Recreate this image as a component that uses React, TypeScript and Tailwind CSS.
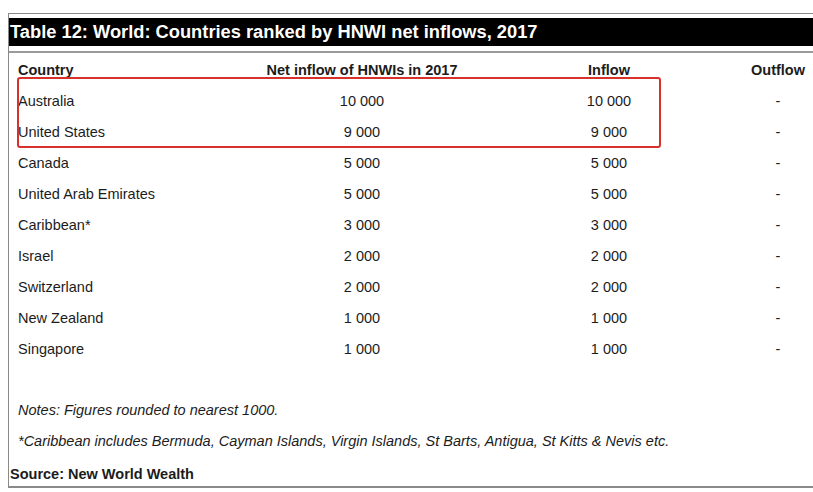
const rows = [
  { country: 'Australia', net: '10 000', inflow: '10 000', outflow: '-' },
  { country: 'United States', net: '9 000', inflow: '9 000', outflow: '-' },
  { country: 'Canada', net: '5 000', inflow: '5 000', outflow: '-' },
  { country: 'United Arab Emirates', net: '5 000', inflow: '5 000', outflow: '-' },
  { country: 'Caribbean*', net: '3 000', inflow: '3 000', outflow: '-' },
  { country: 'Israel', net: '2 000', inflow: '2 000', outflow: '-' },
  { country: 'Switzerland', net: '2 000', inflow: '2 000', outflow: '-' },
  { country: 'New Zealand', net: '1 000', inflow: '1 000', outflow: '-' },
  { country: 'Singapore', net: '1 000', inflow: '1 000', outflow: '-' },
];

const Row = ({ cells, bold }: { cells: string[]; bold?: boolean }) => (
  <div className={`flex h-[31px] items-center whitespace-nowrap pl-[9px] ${bold ? 'font-bold' : ''}`}>
    <div className="w-[247px]">{cells[0]}</div>
    <div className="w-[194px] text-center">{cells[1]}</div>
    <div className="ml-[70px] w-[160px] text-center">{cells[2]}</div>
    <div className="ml-[59px] w-[60px] text-center">{cells[3]}</div>
  </div>
);

export default function App() {
  return (
    <div className="h-[492px] w-[813px] overflow-hidden bg-white pt-[13px] font-['Liberation_Sans',Arial,sans-serif] text-[14.5px] text-[#1c1c1c]">
      <div className="relative ml-[8px] h-[475px] border-b-2 border-l-[1.5px] border-t-[1.5px] border-[#8a8a8a]">
        <div className="mt-[4px] flex h-[28px] items-center bg-black pl-[1px] pt-[1px] text-[18.3px] font-bold leading-none text-white">
          Table 12: World: Countries ranked by HNWI net inflows, 2017
        </div>
        <div className="mt-[5px] h-[2px] bg-[#9a9a9a]" />

        <div className="mt-[2px]">
          <Row cells={['Country', 'Net inflow of HNWIs in 2017', 'Inflow', 'Outflow']} bold />
          {rows.map((r) => (
            <Row key={r.country} cells={[r.country, r.net, r.inflow, r.outflow]} />
          ))}
        </div>

        <div className="mt-[30px] pl-[9px] italic">
          <p className="h-[31px] leading-[31px]">Notes: Figures rounded to nearest 1000.</p>
          <p className="h-[31px] leading-[31px]">
            *Caribbean includes Bermuda, Cayman Islands, Virgin Islands, St Barts, Antigua, St Kitts &amp; Nevis etc.
          </p>
        </div>
        <p className="mt-[2px] pl-[1px] font-bold leading-[31px]">Source: New World Wealth</p>

        {/* red highlight around the top two rows */}
        <div className="absolute left-[8px] top-[63px] h-[71px] w-[644px] rounded-[3px] border-2 border-[#d8302a]" />
      </div>
    </div>
  );
}
